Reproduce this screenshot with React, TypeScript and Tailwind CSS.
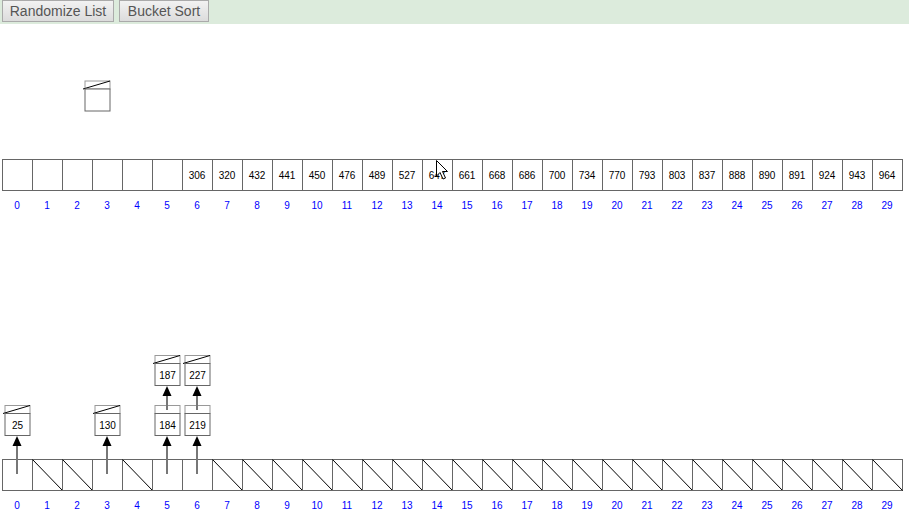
import React from "react";

const CELL_W = 30;
const LEFT = 2;

// sorted output so far (index 0-5 still empty)
const topValues: (number | null)[] = [
  null, null, null, null, null, null,
  306, 320, 432, 441, 450, 476, 489, 527, 647, 661, 668, 686, 700,
  734, 770, 793, 803, 837, 888, 890, 891, 924, 943, 964,
];

// buckets: index -> list of values, bottom node first
const buckets: Record<number, number[]> = {
  0: [25],
  3: [130],
  5: [184, 187],
  6: [219, 227],
};

const cx = (i: number) => LEFT + i * CELL_W + CELL_W / 2;

// list node: pointer strip on top, value box below
function ListNode({ x, y, value, isNull = true }: { x: number; y: number; value?: number; isNull?: boolean }) {
  return (
    <g>
      <rect x={x} y={y} width={25} height={8} fill="#fff" stroke="#999" strokeWidth={1} />
      {isNull && <line x1={x - 2} y1={y + 8} x2={x + 25} y2={y} stroke="#000" strokeWidth={1} />}
      <rect x={x} y={y + 8} width={25} height={22} fill="#fff" stroke="#666" strokeWidth={1} />
      {value !== undefined && (
        <text x={x + 12.5} y={y + 19.5} textAnchor="middle" dominantBaseline="central" fontSize={10} fill="#000">
          {value}
        </text>
      )}
    </g>
  );
}

function Arrow({ x, y1, y2 }: { x: number; y1: number; y2: number }) {
  return (
    <g>
      <line x1={x} y1={y1} x2={x} y2={y2 + 9} stroke="#777" strokeWidth={2} />
      <polygon points={`${x},${y2} ${x - 4.5},${y2 + 10} ${x + 4.5},${y2 + 10}`} fill="#000" />
    </g>
  );
}

function IndexRow({ y }: { y: number }) {
  return (
    <>
      {topValues.map((_, i) => (
        <text key={i} x={cx(i)} y={y} textAnchor="middle" dominantBaseline="central" fontSize={10} fill="#0000ff">
          {i}
        </text>
      ))}
    </>
  );
}

export default function App() {
  return (
    <div className="w-[909px] h-[511px] overflow-hidden bg-white font-['Liberation_Sans',Arial,sans-serif]">
      {/* toolbar */}
      <div className="flex h-[24px] items-start gap-[5px] bg-[#dcebdc] pl-[2px]">
        <button className="h-[22px] w-[112px] border border-[#aaa] bg-gradient-to-b from-[#f2f2f2] to-[#dcdcdc] text-[14px] text-[#555]">
          Randomize List
        </button>
        <button className="h-[22px] w-[90px] border border-[#aaa] bg-gradient-to-b from-[#f2f2f2] to-[#dcdcdc] text-[14px] text-[#555]">
          Bucket Sort
        </button>
      </div>

      {/* animation canvas */}
      <svg width={909} height={487} viewBox="0 24 909 487" className="block font-['Liberation_Sans',Arial,sans-serif]">
        {/* node being moved */}
        <ListNode x={85} y={81} />

        {/* output array */}
        {topValues.map((v, i) => (
          <g key={i}>
            <rect x={LEFT + i * CELL_W + 0.5} y={159.5} width={CELL_W} height={31} fill="#fff" stroke="#666" />
            {v !== null && (
              <text x={cx(i)} y={175} textAnchor="middle" dominantBaseline="central" fontSize={10} fill="#000">
                {v}
              </text>
            )}
          </g>
        ))}
        <IndexRow y={205} />

        {/* bucket array */}
        {topValues.map((_, i) => {
          const x0 = LEFT + i * CELL_W + 0.5;
          return (
            <g key={i}>
              <rect x={x0} y={459.5} width={CELL_W} height={31} fill="#fff" stroke="#666" />
              {!buckets[i] && <line x1={x0} y1={459.5} x2={x0 + CELL_W} y2={490.5} stroke="#000" strokeWidth={1} />}
            </g>
          );
        })}
        <IndexRow y={505} />

        {/* bucket lists */}
        {Object.entries(buckets).map(([k, vals]) => {
          const i = Number(k);
          const x = cx(i);
          return (
            <g key={k}>
              <Arrow x={x} y1={474} y2={436} />
              {vals.map((v, j) => (
                <ListNode key={v} x={x - 12} y={405.5 - j * 50} value={v} isNull={j === vals.length - 1} />
              ))}
              {vals.length > 1 && <Arrow x={x} y1={410} y2={386} />}
            </g>
          );
        })}

        {/* mouse pointer */}
        <path
          d="M436.5 160.5 L436.5 176 L440 172.5 L443 179 L445.5 178 L442.5 171.5 L447.5 171.5 Z"
          fill="#fff"
          stroke="#000"
          strokeWidth={1}
        />
      </svg>
    </div>
  );
}
